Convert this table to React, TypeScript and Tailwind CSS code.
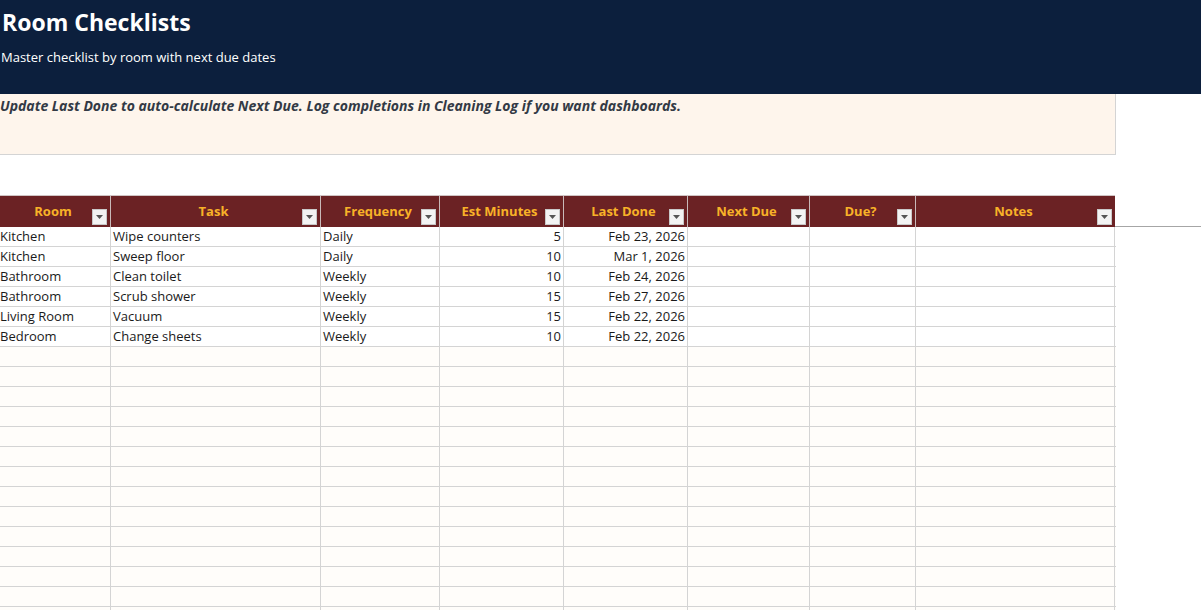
const columns = [
  { name: "Room", w: 110 },
  { name: "Task", w: 210 },
  { name: "Frequency", w: 119 },
  { name: "Est Minutes", w: 124 },
  { name: "Last Done", w: 124 },
  { name: "Next Due", w: 122 },
  { name: "Due?", w: 106 },
  { name: "Notes", w: 200 },
];

const rows = [
  ["Kitchen", "Wipe counters", "Daily", "5", "Feb 23, 2026"],
  ["Kitchen", "Sweep floor", "Daily", "10", "Mar 1, 2026"],
  ["Bathroom", "Clean toilet", "Weekly", "10", "Feb 24, 2026"],
  ["Bathroom", "Scrub shower", "Weekly", "15", "Feb 27, 2026"],
  ["Living Room", "Vacuum", "Weekly", "15", "Feb 22, 2026"],
  ["Bedroom", "Change sheets", "Weekly", "10", "Feb 22, 2026"],
];

const FilterButton = () => (
  <div className="absolute right-[3px] bottom-[2px] flex h-[16px] w-[15px] items-center justify-center border border-[#c9c9c9] bg-[#f3f3f3]">
    <svg width="7" height="4" viewBox="0 0 7 4">
      <path d="M0 0 H7 L3.5 4 Z" fill="#555" />
    </svg>
  </div>
);

export default function App() {
  const blanks = Array.from({ length: 14 });
  return (
    <div
      className="h-[610px] w-[1201px] overflow-hidden bg-white text-[13px] text-[#1a1a1a]"
      style={{ fontFamily: '"Open Sans", "Noto Sans", sans-serif' }}
    >
      <div className="h-[94px] bg-[#0c1f3d] pt-[6px] text-white">
        <h1 className="pl-[2px] text-[23px] leading-[32px] font-bold">Room Checklists</h1>
        <p className="mt-[10px] pl-[1px] text-[13px] leading-[18px]">
          Master checklist by room with next due dates
        </p>
      </div>
      <div className="h-[61px] w-[1116px] border-r border-b border-[#d4d4d4] bg-[#fef5ec] pt-[3px]">
        <p className="text-[14px] leading-[18px] font-bold text-[#333a45] italic">
          Update Last Done to auto-calculate Next Due. Log completions in Cleaning Log if you want dashboards.
        </p>
      </div>
      <div className="h-[40px]" />
      <div className="flex">
        <div className="flex h-[32px] border-t border-[#d0c4c4]">
          {columns.map((c, i) => (
            <div
              key={c.name}
              className={`relative flex h-full items-center justify-center bg-[#6b2224] font-bold text-[#f8b228] ${i > 0 ? "border-l border-[#c9b9b9]" : ""}`}
              style={{ width: c.w }}
            >
              <span className="pr-[4px]">{c.name}</span>
              <FilterButton />
            </div>
          ))}
        </div>
        <div className="flex-1 border-b border-[#a6a6a6]" />
      </div>
      <div className="w-[1116px]">
        {rows.map((r, ri) => (
          <div key={ri} className="flex h-[20px] border-b border-[#d4d4d4] leading-[19px]">
            {columns.map((c, i) => {
              const v = r[i] ?? "";
              const right = i === 3 || i === 4;
              return (
                <div
                  key={c.name}
                  className={`h-full overflow-hidden whitespace-nowrap ${i > 0 ? "border-l border-[#d4d4d4]" : ""} ${i === 7 ? "border-r" : ""} ${right ? "pr-[2px] text-right" : i === 0 ? "" : "pl-[2px]"}`}
                  style={{ width: c.w }}
                >
                  {v}
                </div>
              );
            })}
          </div>
        ))}
        {blanks.map((_, ri) => (
          <div key={ri} className="flex h-[20px] border-b border-[#d4d4d4] bg-[#fffdfa]">
            {columns.map((c, i) => (
              <div
                key={c.name}
                className={`h-full ${i > 0 ? "border-l border-[#d4d4d4]" : ""} ${i === 7 ? "border-r" : ""}`}
                style={{ width: c.w }}
              />
            ))}
          </div>
        ))}
      </div>
    </div>
  );
}
